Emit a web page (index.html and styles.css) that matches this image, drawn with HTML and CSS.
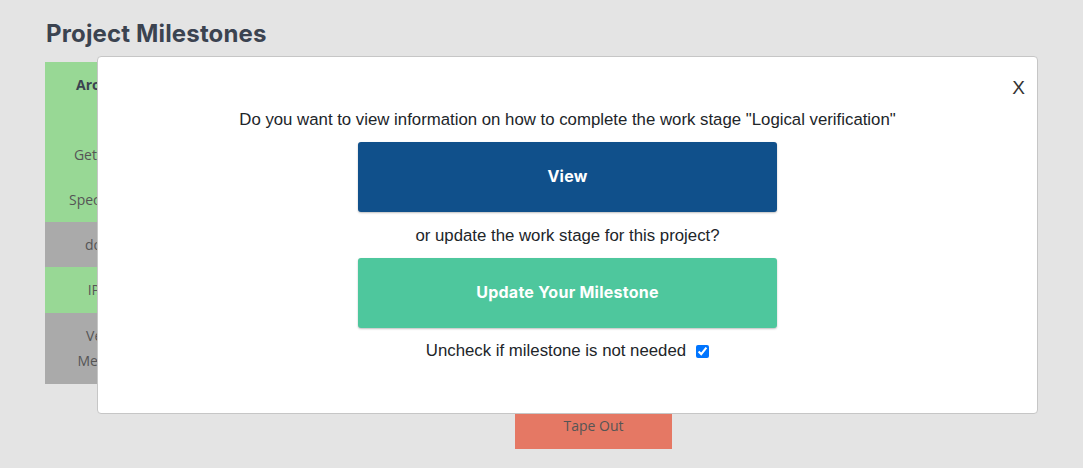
FILE: index.html
```html
<!DOCTYPE html>
<html>
<head>
<meta charset="utf-8">
<link rel="stylesheet" href="styles.css">
</head>
<body>
<main class="page">
  <h1 class="title">Project Milestones</h1>
  <section class="board">
    <div class="column">
      <div class="cell done head">Architecture Doc</div>
      <div class="cell done"><div>Market</div><div>Get Requirements:</div></div>
      <div class="cell done">Specification Review</div>
      <div class="cell todo">documentation</div>
      <div class="cell done tall">IP Integrations</div>
      <div class="cell todo tall"><div>Verification Set</div><div>Methodology Doc</div></div>
    </div>
    <div class="final">
      <div class="cell late">Tape Out</div>
    </div>
  </section>
</main>

<div class="modal">
  <button class="close" type="button">X</button>
  <div class="modal-body">
    <p class="line">Do you want to view information on how to complete the work stage "Logical verification"</p>
    <button class="btn btn-view" type="button">View</button>
    <p class="line or">or update the work stage for this project?</p>
    <button class="btn btn-update" type="button">Update Your Milestone</button>
    <label class="line check">Uncheck if milestone is not needed <input type="checkbox" checked></label>
  </div>
</div>
</body>
</html>
```

FILE: styles.css
```css
* { box-sizing: border-box; }
html, body { margin: 0; padding: 0; }
body {
  background: #e4e4e4;
  width: 1083px;
  height: 468px;
  overflow: hidden;
  font-family: "Liberation Sans", Arial, sans-serif;
}
.page {
  padding: 19px 0 0 45px;
}
.title {
  margin: 0 0 0 1px;
  font-family: Inter, "Open Sans", sans-serif;
  font-weight: 700;
  font-size: 24px;
  line-height: 30px;
  color: #3b4350;
  letter-spacing: 0.15px;
}
.board {
  margin-top: 13px;
}
.column {
  width: 180px;
  display: flex;
  flex-direction: column;
}
.cell {
  font-family: "Open Sans", sans-serif;
  font-size: 14px;
  line-height: 25px;
  color: #555;
  text-align: center;
  padding: 10px 4px;
  white-space: nowrap;
}
.cell.tall { padding-bottom: 11px; }
.cell.head { font-weight: 700; color: #3b4350; }
.done { background: #98d895; }
.todo { background: #aaaaaa; }
.late { background: #e57864; }
.final {
  margin: 19px 0 0 470px;
  width: 157px;
}
.final .cell { padding: 10px 4px 11px; }

.modal {
  position: absolute;
  top: 56px;
  left: 97px;
  width: 941px;
  height: 358px;
  background: #fff;
  border: 1px solid #c6c6c6;
  border-radius: 4px;
}
.close {
  position: absolute;
  top: 21px;
  right: 12px;
  border: 0;
  background: none;
  padding: 0;
  font-family: "Liberation Sans", Arial, sans-serif;
  font-size: 19px;
  line-height: 20px;
  color: #333;
}
.modal-body {
  padding-top: 53px;
  display: flex;
  flex-direction: column;
  align-items: center;
}
.line {
  margin: 0;
  font-size: 16.8px;
  line-height: 20px;
  color: #212529;
}
.btn {
  width: 419px;
  height: 70px;
  border: 0;
  border-radius: 3px;
  color: #fff;
  font-family: Inter, "Open Sans", sans-serif;
  font-weight: 700;
  font-size: 16px;
  letter-spacing: 0.25px;
  box-shadow: 0 1px 2px rgba(0,0,0,0.25);
}
.btn-view { background: #10508b; margin-top: 12px; padding-bottom: 3px; }
.or { margin-top: 14px; }
.btn-update { background: #4ec79d; margin-top: 12px; padding-bottom: 3px; }
.check { margin-top: 13px; display: flex; align-items: center; }
.check input {
  margin: 0 0 0 10px;
  width: 13px;
  height: 13px;
}
```
